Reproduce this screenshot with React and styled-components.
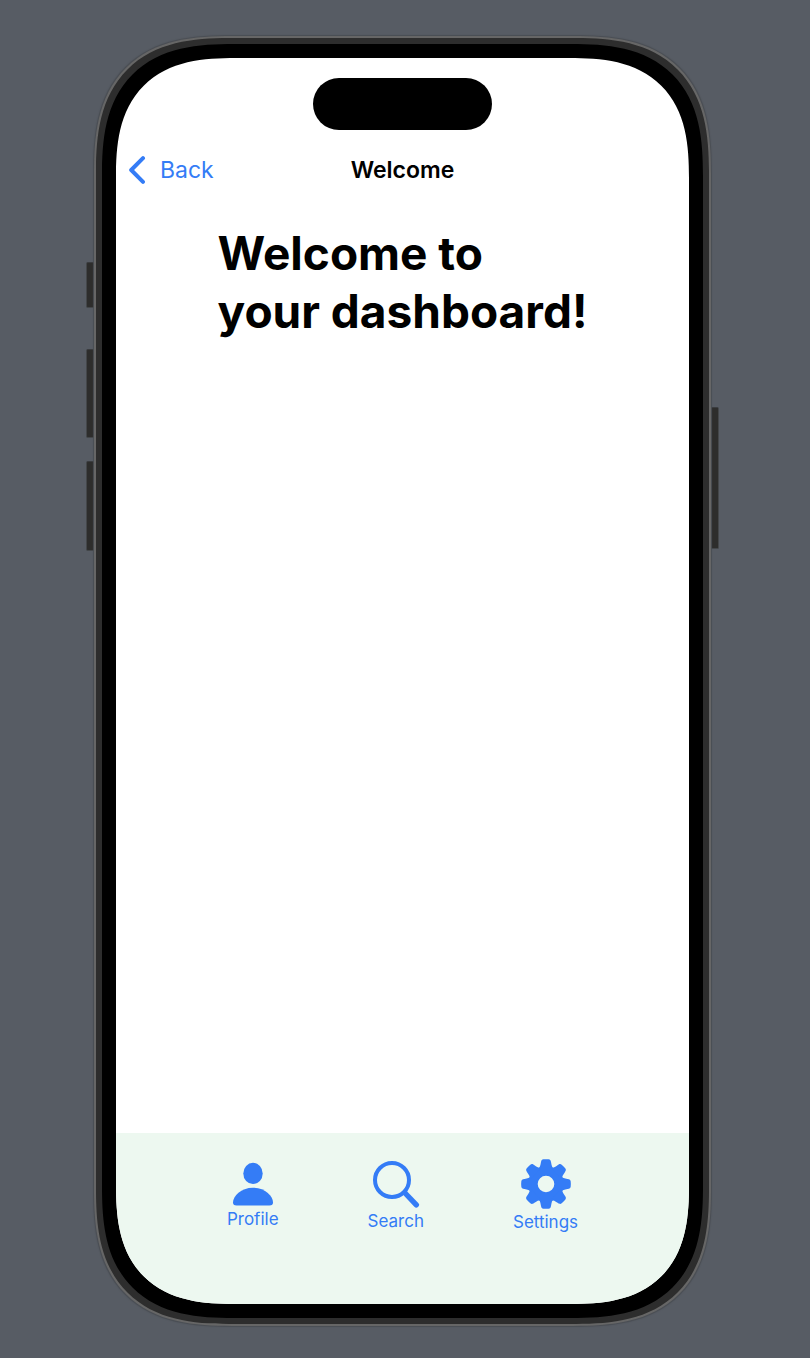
import React from "react";
import styled, { createGlobalStyle } from "styled-components";

const blue = "#347cf6";
const font = 'Inter, "Liberation Sans", sans-serif';

const GlobalStyle = createGlobalStyle`
  *, *::before, *::after { box-sizing: border-box; }
  body {
    margin: 0;
    background: #575c64;
    color: #000;
    font-family: ${font};
  }
`;

const Stage = styled.div`
  display: flex;
  min-height: 100vh;
  padding: 36px 99px 32px 94px;
`;

const Device = styled.div`
  position: relative;
  display: flex;
  flex: 1;
`;

const SideButton = styled.span`
  position: absolute;
  top: ${(p) => p.$top}px;
  ${(p) => p.$side}: -8px;
  width: 12px;
  height: ${(p) => p.$length}px;
  border: 1px solid #44474a;
  border-top-color: #3a3c3f;
  border-radius: 2px;
  background: #2d2d2c;
`;

const rounded = (circle, smooth) => `
  border-radius: ${circle}px;
  @supports (corner-shape: superellipse(1.4)) {
    border-radius: ${smooth}px;
    corner-shape: superellipse(1.4);
  }
`;

const Frame = styled.div`
  position: relative;
  display: flex;
  flex: 1;
  padding: 6px;
  border: 2px solid #666;
  background: #2d2d2d;
  box-shadow: 0 0 1px 1px #4a4e54;
  ${rounded(116, 138)}
`;

const Bezel = styled.div`
  display: flex;
  flex: 1;
  padding: 14px;
  background: #000;
  ${rounded(108, 132)}
`;

const Screen = styled.div`
  display: flex;
  flex: 1;
  flex-direction: column;
  overflow: hidden;
  background: #fff;
  ${rounded(94, 120)}
`;

const StatusArea = styled.div`
  display: flex;
  justify-content: center;
  padding: 20px 0 10px;
`;

const Island = styled.div`
  width: 179px;
  height: 52px;
  border-radius: 26px;
  background: #000;
`;

const NavBar = styled.header`
  display: grid;
  grid-template-columns: 1fr auto 1fr;
  align-items: center;
  height: 60px;
  padding: 0 12px;
`;

const BackButton = styled.button`
  display: flex;
  align-items: center;
  justify-self: start;
  gap: 14px;
  padding: 0;
  border: 0;
  background: none;
  color: ${blue};
  font: 400 23px/30px ${font};
  cursor: pointer;
`;

const NavTitle = styled.span`
  font-size: 23px;
  font-weight: 600;
  line-height: 30px;
`;

const Content = styled.main`
  display: flex;
  flex: 1;
  justify-content: center;
  align-items: flex-start;
  padding-top: 24px;
`;

const Heading = styled.h1`
  margin: 0;
  font-size: 46px;
  font-weight: 700;
  line-height: 58px;
`;

const TabBar = styled.nav`
  display: flex;
  justify-content: center;
  align-items: center;
  gap: 89px;
  padding: 26px 0 71px;
  background: #edf8f0;
`;

const Tab = styled.button`
  display: flex;
  flex-direction: column;
  align-items: center;
  gap: 2px;
  padding: 0;
  border: 0;
  background: none;
  color: ${blue};
  font: 400 17px/22px ${font};
  cursor: pointer;
`;

const Icon = styled.svg`
  display: block;
  flex: none;
`;

const ChevronIcon = () => (
  <Icon width="18" height="28" viewBox="0 0 18 28" fill="none" aria-hidden="true">
    <path d="M15 2.2 3.2 14 15 25.8" stroke="currentColor" strokeWidth="4" strokeLinecap="round" strokeLinejoin="round" />
  </Icon>
);

const ProfileIcon = () => (
  <Icon width="42" height="44" viewBox="0 0 42 44" fill="currentColor" aria-hidden="true">
    <ellipse cx="21" cy="11.4" rx="9.7" ry="10.6" />
    <path d="M4.6 43.6C2 43.6 1 42.6 1 40.6 1 34 9 25.8 21 25.8S41 34 41 40.6c0 2-1 3-3.6 3Z" />
  </Icon>
);

const SearchIcon = () => (
  <Icon width="48" height="48" viewBox="0 0 48 48" fill="none" stroke="currentColor" strokeLinecap="round" aria-hidden="true">
    <circle cx="20" cy="20" r="17" strokeWidth="4" />
    <path d="M33 33 44.3 44.8" strokeWidth="5.4" />
  </Icon>
);

const toothAngles = [0, 45, 90, 135, 180, 225, 270, 315];

const SettingsIcon = () => (
  <Icon width="50" height="50" viewBox="0 0 50 50" fill="currentColor" aria-hidden="true">
    <circle cx="25" cy="25" r="13" fill="none" stroke="currentColor" strokeWidth="9.4" />
    {toothAngles.map((angle) => (
      <path
        key={angle}
        transform={`rotate(${angle} 25 25)`}
        d="M17 10.5C19 8.5 19.4 6.5 19.9 3.6 20.3 1.2 20.9.5 22.5.3Q25 0 27.5.3C29.1.5 29.7 1.2 30.1 3.6 30.6 6.5 31 8.5 33 10.5Z"
      />
    ))}
  </Icon>
);

const tabs = [
  { label: "Profile", Glyph: ProfileIcon },
  { label: "Search", Glyph: SearchIcon },
  { label: "Settings", Glyph: SettingsIcon },
];

export default function App() {
  return (
    <>
      <GlobalStyle />
      <Stage>
        <Device>
          <SideButton $side="left" $top={226} $length={46} />
          <SideButton $side="left" $top={313} $length={89} />
          <SideButton $side="left" $top={425} $length={90} />
          <SideButton $side="right" $top={371} $length={142} />
          <Frame>
            <Bezel>
              <Screen>
                <StatusArea>
                  <Island />
                </StatusArea>
                <NavBar>
                  <BackButton type="button">
                    <ChevronIcon />
                    Back
                  </BackButton>
                  <NavTitle>Welcome</NavTitle>
                </NavBar>
                <Content>
                  <Heading>
                    Welcome to
                    <br />
                    your dashboard!
                  </Heading>
                </Content>
                <TabBar aria-label="Main">
                  {tabs.map(({ label, Glyph }) => (
                    <Tab key={label} type="button">
                      <Glyph />
                      {label}
                    </Tab>
                  ))}
                </TabBar>
              </Screen>
            </Bezel>
          </Frame>
        </Device>
      </Stage>
    </>
  );
}
